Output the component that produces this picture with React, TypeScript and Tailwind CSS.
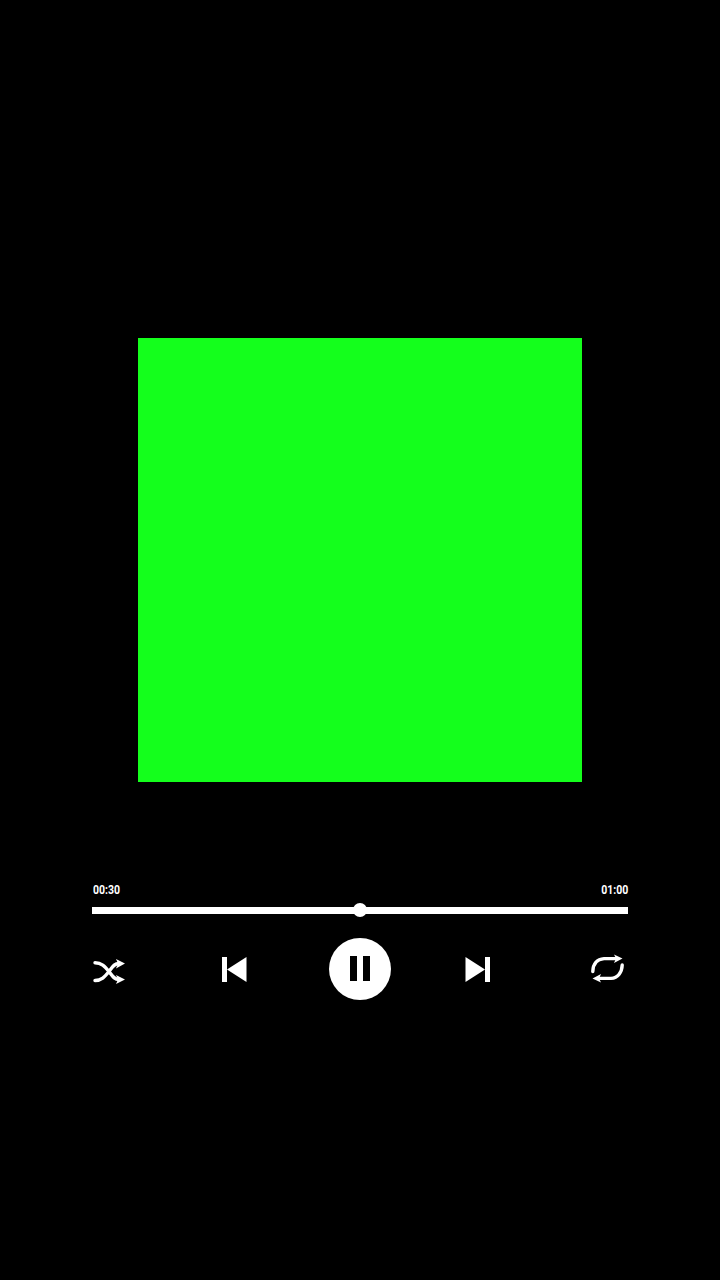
const ShuffleIcon = () => (
  <svg width="32" height="25" viewBox="0 0 32 25" fill="none" className="mt-[21px] shrink-0">
    <path
      d="M2 3.7C8.5 3.7 11.5 7 16 12.5C19.5 17 21 20.5 26 20.5"
      stroke="white"
      strokeWidth="3.4"
      strokeLinecap="round"
    />
    <path
      d="M2 21.5C8.5 21.5 11.5 18 16 12.5C19.5 8 21 4.5 26 4.5"
      stroke="white"
      strokeWidth="3.4"
      strokeLinecap="round"
    />
    <path d="M23 0L32 4.5L23 9.5L25 4.5Z" fill="white" />
    <path d="M23 16L32 20.5L23 25L25 20.5Z" fill="white" />
  </svg>
);

const RepeatIcon = () => (
  <svg width="33" height="29" viewBox="0 0 33 29" fill="none" className="mt-[16px] shrink-0">
    <path
      d="M1.8 17.5C2 10 6 5 13 4.6H25"
      stroke="white"
      strokeWidth="3.4"
      strokeLinecap="round"
    />
    <path
      d="M31.2 11C31 18 27 24 20 24.4H8"
      stroke="white"
      strokeWidth="3.4"
      strokeLinecap="round"
    />
    <path d="M23 0.4L31.5 4.6L23 9L25 4.6Z" fill="white" />
    <path d="M10 20L1.5 24.4L10 28.6L8 24.4Z" fill="white" />
  </svg>
);

const PrevIcon = () => (
  <svg width="25" height="25" viewBox="0 0 25 25" className="mt-[19px] shrink-0">
    <rect x="0" y="0" width="5" height="25" fill="white" />
    <path d="M24.5 0V25L5 12.5Z" fill="white" />
  </svg>
);

const NextIcon = () => (
  <svg width="25" height="25" viewBox="0 0 25 25" className="mt-[19px] shrink-0">
    <path d="M0.5 0V25L20 12.5Z" fill="white" />
    <rect x="20" y="0" width="5" height="25" fill="white" />
  </svg>
);

export default function App() {
  return (
    <div
      className="flex h-[1280px] w-[720px] flex-col items-center overflow-hidden bg-black pt-[338px] text-white"
      style={{ fontFamily: '"Roboto", "Liberation Sans", sans-serif' }}
    >
      {/* cover */}
      <div className="h-[444px] w-[444px] bg-[#14ff1c]" />

      {/* times */}
      <div className="mt-[101px] flex w-[536px] justify-between pl-[1px] text-[12.5px] leading-[14px] font-bold">
        <span className="origin-left scale-x-[0.84]">00:30</span>
        <span className="origin-right scale-x-[0.84]">01:00</span>
      </div>

      {/* progress */}
      <div className="mt-[6px] flex h-[14px] w-[536px] items-center">
        <div className="h-[7px] flex-1 bg-white" />
        <div className="-mx-[7px] h-[14px] w-[14px] rounded-full bg-white" />
        <div className="h-[7px] flex-1 bg-white" />
      </div>

      {/* controls */}
      <div className="mt-[21px] flex w-[536px] items-start pl-[1px]">
        <ShuffleIcon />
        <div className="ml-[97px]">
          <PrevIcon />
        </div>
        <div className="ml-[82px] flex h-[61.5px] w-[61.5px] shrink-0 items-center justify-center gap-[6.5px] rounded-full bg-white">
          <div className="h-[25px] w-[6.5px] bg-black" />
          <div className="h-[25px] w-[6.5px] bg-black" />
        </div>
        <div className="ml-[74.5px]">
          <NextIcon />
        </div>
        <div className="ml-[101px]">
          <RepeatIcon />
        </div>
      </div>
    </div>
  );
}
